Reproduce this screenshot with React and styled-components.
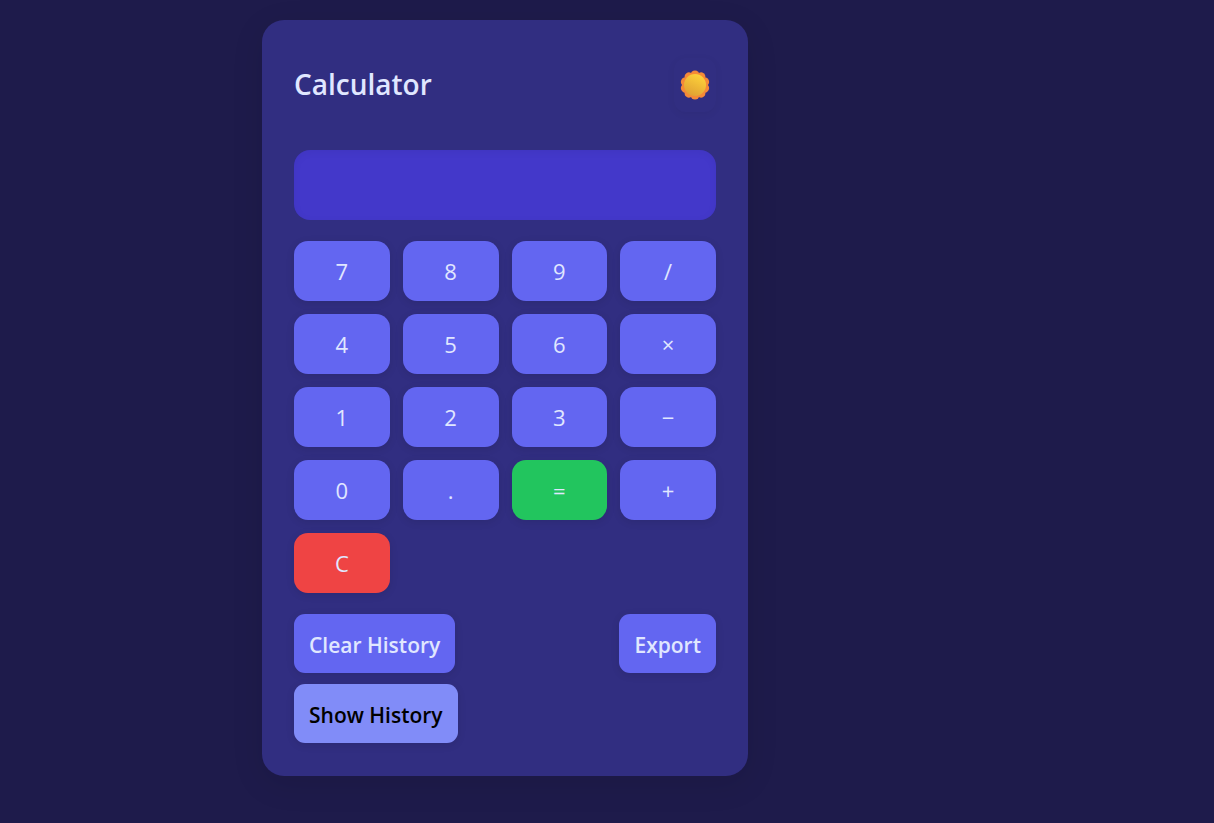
import React, { useState } from "react";
import styled, { createGlobalStyle } from "styled-components";

const GlobalStyle = createGlobalStyle`
  *, *::before, *::after { box-sizing: border-box; }
  body {
    margin: 0;
    min-height: 100vh;
    background: #1e1b4b;
    color: #e0e7ff;
    font-family: "Segoe UI", "Open Sans", "Noto Sans", sans-serif;
  }
`;

const Page = styled.main`
  display: flex;
  justify-content: center;
  padding: 20px 204px 20px 0;

  @media (max-width: 900px) {
    padding: 20px;
  }
`;

const Card = styled.section`
  width: 100%;
  max-width: 486px;
  padding: 32px 32px 33px;
  border-radius: 22px;
  background: #312e81;
  box-shadow: 0 8px 32px rgba(0, 0, 0, 0.1);
`;

const Header = styled.header`
  display: flex;
  align-items: center;
  justify-content: space-between;
  height: 66px;
  margin-bottom: 32px;
`;

const Title = styled.h1`
  margin: 0;
  padding-bottom: 2px;
  font-size: 28px;
  line-height: 40px;
  font-weight: 600;
`;

const Button = styled.button`
  border: 0;
  padding: 0;
  color: #e0e7ff;
  font-family: inherit;
  font-size: 22px;
  line-height: 28px;
  cursor: pointer;
  box-shadow: 0 2px 8px rgba(0, 0, 0, 0.1);
`;

const ThemeButton = styled(Button)`
  display: flex;
  align-items: center;
  justify-content: center;
  width: 42px;
  height: 54px;
  border-radius: 12px;
  background: transparent;
  box-shadow: 0 2px 8px rgba(0, 0, 0, 0.05);
`;

const Display = styled.input`
  display: block;
  width: 100%;
  height: 70px;
  margin-bottom: 21px;
  padding: 16px;
  border: 0;
  border-radius: 16px;
  outline: 0;
  background: #4338ca;
  box-shadow: inset 0 2px 8px rgba(0, 0, 0, 0.05);
  color: inherit;
  font: inherit;
  font-size: 28px;
  text-align: right;
`;

const Keypad = styled.div`
  display: grid;
  grid-template-columns: repeat(4, 1fr);
  gap: 13px;
  margin-bottom: 21px;
`;

const keyColors = { equals: "#22c55e", clear: "#ef4444" };

const Key = styled(Button)`
  height: 60px;
  border-radius: 14px;
  background: ${({ $kind }) => keyColors[$kind] || "#6366f1"};
`;

const Actions = styled.div`
  display: flex;
  flex-wrap: wrap;
  justify-content: space-between;
  margin-bottom: 11px;
`;

const ActionButton = styled(Button)`
  height: 59px;
  padding: 2px 15px 0;
  border-radius: 11px;
  background: ${({ $light }) => ($light ? "#818cf8" : "#6366f1")};
  color: ${({ $light }) => ($light ? "#000" : "#e0e7ff")};
  font-size: 21px;
  font-weight: 600;
`;

const rays = Array.from({ length: 10 }, (_, i) => i * 36);

function SunIcon() {
  return (
    <svg width="30" height="30" viewBox="0 0 30 30" aria-hidden="true">
      <defs>
        <linearGradient id="disc" x1="0.75" y1="0.05" x2="0.3" y2="1">
          <stop offset="0" stopColor="#fdd23a" />
          <stop offset="1" stopColor="#e0a033" />
        </linearGradient>
      </defs>
      {rays.map((angle) => (
        <circle key={angle} cx="15" cy="4.9" r="4.5" fill="#f58a38" transform={`rotate(${angle} 15 15)`} />
      ))}
      <circle cx="15" cy="15" r="12" fill="#f58a38" />
      <circle cx="15" cy="15" r="11" fill="url(#disc)" />
    </svg>
  );
}

const keys = ["7", "8", "9", "/", "4", "5", "6", "×", "1", "2", "3", "−", "0", ".", "=", "+", "C"];
const kinds = { "=": "equals", C: "clear" };

function evaluate(text) {
  const parts = text.match(/\d*\.?\d+|[/×−+]/g) || [];
  const stack = [Number(parts[0] || 0)];
  for (let i = 1; i < parts.length; i += 2) {
    const n = Number(parts[i + 1]);
    if (parts[i] === "×") stack.push(stack.pop() * n);
    else if (parts[i] === "/") stack.push(stack.pop() / n);
    else stack.push(parts[i] === "−" ? -n : n);
  }
  return String(stack.reduce((a, b) => a + b, 0));
}

export default function App() {
  const [value, setValue] = useState("");

  const press = (key) => {
    if (key === "C") setValue("");
    else if (key === "=") setValue(evaluate(value));
    else setValue(value + key);
  };

  return (
    <>
      <GlobalStyle />
      <Page>
        <Card>
          <Header>
            <Title>Calculator</Title>
            <ThemeButton type="button" aria-label="Toggle theme">
              <SunIcon />
            </ThemeButton>
          </Header>
          <Display type="text" aria-label="Result" value={value} readOnly />
          <Keypad>
            {keys.map((key) => (
              <Key key={key} type="button" $kind={kinds[key]} onClick={() => press(key)}>
                {key}
              </Key>
            ))}
          </Keypad>
          <Actions>
            <ActionButton type="button">Clear History</ActionButton>
            <ActionButton type="button">Export</ActionButton>
          </Actions>
          <ActionButton type="button" $light>
            Show History
          </ActionButton>
        </Card>
      </Page>
    </>
  );
}
